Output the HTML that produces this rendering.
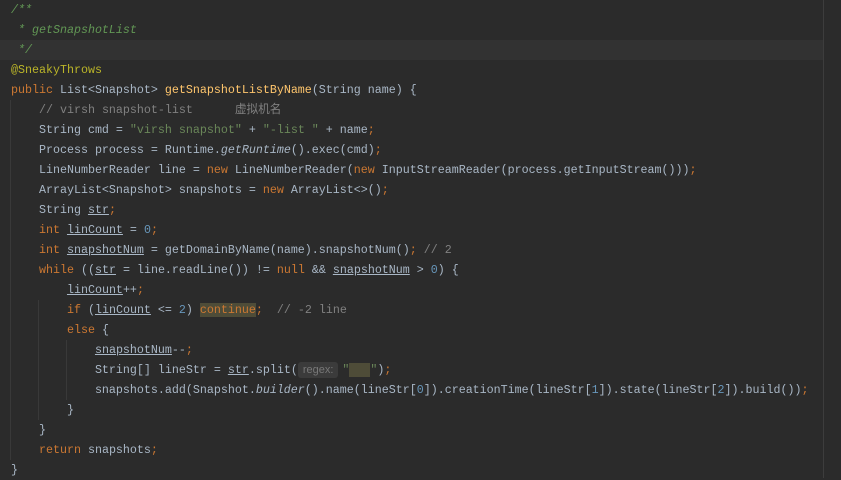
<!DOCTYPE html>
<html><head><meta charset="utf-8"><style>
html,body{margin:0;padding:0;background:#2b2b2b;width:841px;height:478px;overflow:hidden}
.hl{position:absolute;left:0;top:40px;width:823px;height:20px;background:#323232}
.rm{position:absolute;left:823px;top:0;width:1px;height:478px;background:#3d3d3d}
.g{position:absolute;width:1px;background:#393939}
pre{position:absolute;left:11px;top:0;margin:0;font-family:"Liberation Mono","Noto Sans CJK SC",monospace;font-size:11.67px;line-height:20px;color:#a9b7c6;white-space:pre}
.d{color:#629755;font-style:italic}
.c{color:#808080}
.k{color:#cc7832}
.a{color:#bbb529}
.m{color:#ffc66d}
.s{color:#6a8759}
.n{color:#6897bb}
.i{font-style:italic}
.u{text-decoration:underline}
.hb{background:#4e4c38}
.h{background:#3b3b3b;color:#787878;font-family:"Liberation Sans",sans-serif;font-size:11px;border-radius:3px;padding:2px 5px;margin-right:4px}
</style></head><body>
<div class="hl"></div><div class="rm"></div>
<div class="g" style="left:10px;top:100px;height:360px"></div>
<div class="g" style="left:38px;top:300px;height:120px"></div>
<div class="g" style="left:66px;top:340px;height:60px"></div>
<pre><span class="d">/**</span>
<span class="d"> * getSnapshotList</span>
<span class="d"> */</span>
<span class="a">@SneakyThrows</span>
<span class="k">public </span>List&lt;Snapshot&gt; <span class="m">getSnapshotListByName</span>(String name) {
    <span class="c">// virsh snapshot-list      虚拟机名</span>
    String cmd = <span class="s">"virsh snapshot"</span> + <span class="s">"-list "</span> + name<span class="k">;</span>
    Process process = Runtime.<span class="i">getRuntime</span>().exec(cmd)<span class="k">;</span>
    LineNumberReader line = <span class="k">new </span>LineNumberReader(<span class="k">new </span>InputStreamReader(process.getInputStream()))<span class="k">;</span>
    ArrayList&lt;Snapshot&gt; snapshots = <span class="k">new </span>ArrayList&lt;&gt;()<span class="k">;</span>
    String <span class="u">str</span><span class="k">;</span>
    <span class="k">int </span><span class="u">linCount</span> = <span class="n">0</span><span class="k">;</span>
    <span class="k">int </span><span class="u">snapshotNum</span> = getDomainByName(name).snapshotNum()<span class="k">; </span><span class="c">// 2</span>
    <span class="k">while </span>((<span class="u">str</span> = line.readLine()) != <span class="k">null </span>&amp;&amp; <span class="u">snapshotNum</span> &gt; <span class="n">0</span>) {
        <span class="u">linCount</span>++<span class="k">;</span>
        <span class="k">if </span>(<span class="u">linCount</span> &lt;= <span class="n">2</span>) <span class="k hb">continue</span><span class="k">;</span>  <span class="c">// -2 line</span>
        <span class="k">else </span>{
            <span class="u">snapshotNum</span>--<span class="k">;</span>
            String[] lineStr = <span class="u">str</span>.split(<span class="h">regex:</span><span class="s">"<span class="hb">   </span>"</span>)<span class="k">;</span>
            snapshots.add(Snapshot.<span class="i">builder</span>().name(lineStr[<span class="n">0</span>]).creationTime(lineStr[<span class="n">1</span>]).state(lineStr[<span class="n">2</span>]).build())<span class="k">;</span>
        }
    }
    <span class="k">return </span>snapshots<span class="k">;</span>
}</pre>
</body></html>
